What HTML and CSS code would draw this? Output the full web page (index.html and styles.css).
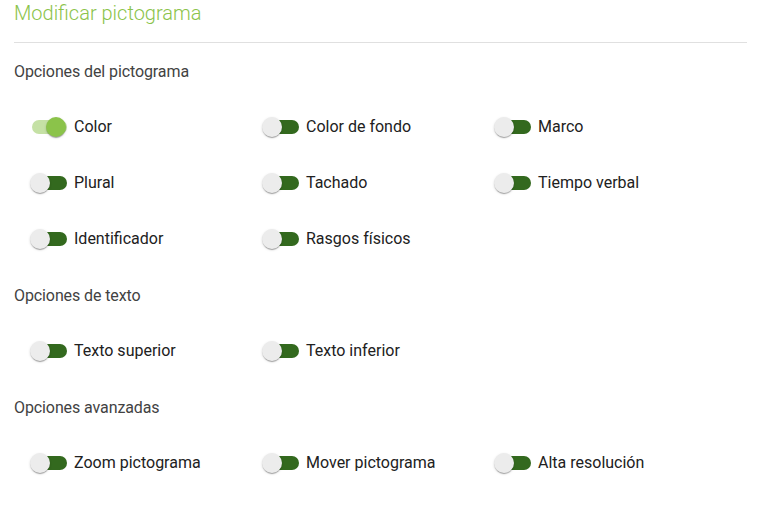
FILE: index.html
```html
<!DOCTYPE html>
<html lang="es">
<head>
<meta charset="utf-8">
<title>Modificar pictograma</title>
<link rel="stylesheet" href="styles.css">
</head>
<body>
<div class="panel">
  <h1 class="title">Modificar pictograma</h1>
  <hr class="divider">
  <h2 class="section">Opciones del pictograma</h2>
  <div class="grid">
    <label class="toggle on"><span class="track"><span class="knob"></span></span><span class="label">Color</span></label>
    <label class="toggle"><span class="track"><span class="knob"></span></span><span class="label">Color de fondo</span></label>
    <label class="toggle"><span class="track"><span class="knob"></span></span><span class="label">Marco</span></label>
    <label class="toggle"><span class="track"><span class="knob"></span></span><span class="label">Plural</span></label>
    <label class="toggle"><span class="track"><span class="knob"></span></span><span class="label">Tachado</span></label>
    <label class="toggle"><span class="track"><span class="knob"></span></span><span class="label">Tiempo verbal</span></label>
    <label class="toggle"><span class="track"><span class="knob"></span></span><span class="label">Identificador</span></label>
    <label class="toggle"><span class="track"><span class="knob"></span></span><span class="label">Rasgos físicos</span></label>
  </div>
  <h2 class="section">Opciones de texto</h2>
  <div class="grid">
    <label class="toggle"><span class="track"><span class="knob"></span></span><span class="label">Texto superior</span></label>
    <label class="toggle"><span class="track"><span class="knob"></span></span><span class="label">Texto inferior</span></label>
  </div>
  <h2 class="section">Opciones avanzadas</h2>
  <div class="grid">
    <label class="toggle"><span class="track"><span class="knob"></span></span><span class="label">Zoom pictograma</span></label>
    <label class="toggle"><span class="track"><span class="knob"></span></span><span class="label">Mover pictograma</span></label>
    <label class="toggle"><span class="track"><span class="knob"></span></span><span class="label">Alta resolución</span></label>
  </div>
</div>
</body>
</html>
```

FILE: styles.css
```css
html, body {
  margin: 0;
  padding: 0;
  background: #ffffff;
}
body {
  font-family: Roboto, "Liberation Sans", sans-serif;
  color: #212121;
}
.panel {
  padding: 0 14px 0 14px;
  width: 733px;
}
.title {
  margin: 0;
  padding-top: 1px;
  font-size: 20px;
  font-weight: 300;
  line-height: 24px;
  color: #8bc34a;
}
.divider {
  border: 0;
  border-top: 1px solid #e0e0e0;
  margin: 17px 0 0 0;
  height: 0;
}
.section {
  margin: 0;
  height: 56px;
  display: flex;
  align-items: center;
  font-size: 16px;
  font-weight: 400;
  letter-spacing: -0.1px;
  color: #424242;
}
.grid {
  display: grid;
  grid-template-columns: 232px 232px 232px;
  grid-auto-rows: 56px;
  padding-left: 16px;
}
.toggle {
  display: flex;
  align-items: center;
  height: 56px;
}
.track {
  position: relative;
  width: 35px;
  height: 14px;
  border-radius: 7px;
  background: #33691e;
  margin-left: 2px;
  flex: none;
}
.knob {
  position: absolute;
  top: -3px;
  left: -2px;
  width: 20px;
  height: 20px;
  border-radius: 50%;
  background: #ececec;
  box-shadow: 0 2px 1px -1px rgba(0,0,0,.2), 0 1px 1px 0 rgba(0,0,0,.14), 0 1px 3px 0 rgba(0,0,0,.12);
}
.toggle.on .track {
  background: #c5e1a5;
}
.toggle.on .knob {
  left: 14px;
  background: #8bc34a;
}
.label {
  margin-left: 7px;
  font-size: 16px;
  line-height: 24px;
  color: #212121;
}
```
